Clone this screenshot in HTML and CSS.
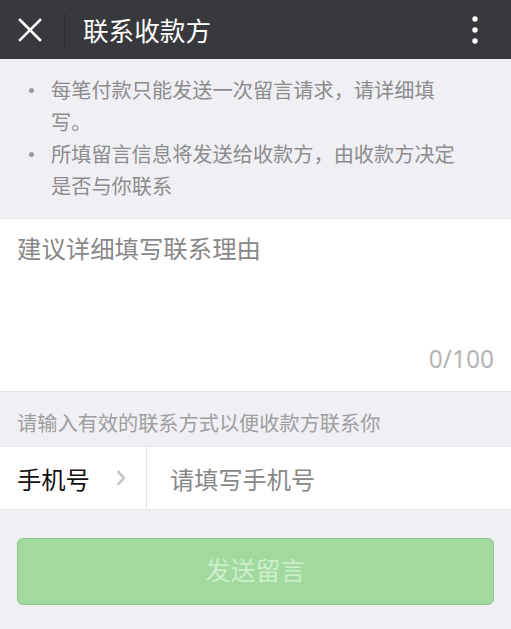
FILE: index.html
```html
<!DOCTYPE html>
<html lang="zh-CN">
<head>
<meta charset="utf-8">
<title>联系收款方</title>
<link rel="stylesheet" href="styles.css">
</head>
<body>
<header class="topbar">
  <span class="close">
    <svg width="24" height="24" viewBox="0 0 24 24"><path d="M2 2L22 22M22 2L2 22" stroke="#fff" stroke-width="2.6" stroke-linecap="square" fill="none"/></svg>
  </span>
  <span class="divider"></span>
  <h1 class="title">联系收款方</h1>
  <span class="more">
    <svg width="8" height="28" viewBox="0 0 8 28"><circle cx="4" cy="3" r="2.7" fill="#fff"/><circle cx="4" cy="14" r="2.7" fill="#fff"/><circle cx="4" cy="25" r="2.7" fill="#fff"/></svg>
  </span>
</header>
<ul class="notes">
  <li>每笔付款只能发送一次留言请求，请详细填写。</li>
  <li>所填留言信息将发送给收款方，由收款方决定是否与你联系</li>
</ul>
<section class="message">
  <div class="placeholder">建议详细填写联系理由</div>
  <div class="counter">0/100</div>
</section>
<p class="hint">请输入有效的联系方式以便收款方联系你</p>
<section class="phone">
  <div class="phone-label">手机号
    <svg class="chev" width="12" height="18" viewBox="0 0 12 18"><path d="M2.5 2L9 9L2.5 16" stroke="#c8c8c8" stroke-width="2.6" fill="none"/></svg>
  </div>
  <div class="phone-input">请填写手机号</div>
</section>
<div class="btn-wrap">
  <div class="btn">发送留言</div>
</div>
</body>
</html>
```
FILE: styles.css
```css
* { box-sizing: border-box; }
html, body {
  margin: 0;
  padding: 0;
}
body {
  background: #efeff4;
  font-family: "Noto Sans CJK SC", "Noto Sans", sans-serif;
  width: 511px;
  height: 629px;
  overflow: hidden;
}
.topbar {
  height: 59px;
  background: #38393d;
  display: flex;
  align-items: center;
  padding-left: 18px;
  padding-right: 32px;
}
.close {
  display: flex;
  width: 24px;
  height: 24px;
}
.divider {
  width: 1px;
  height: 34px;
  background: #2c2d30;
  margin-left: 22px;
}
.title {
  margin: 0 0 0 18px;
  font-size: 25.6px;
  font-weight: 400;
  color: #fff;
  line-height: 32px;
  flex: 1;
}
.more {
  display: flex;
}
.notes {
  list-style: none;
  margin: 0;
  padding: 15px 0 16px 51px;
  width: 466px;
  color: #8c8c8c;
  font-size: 20.2px;
  line-height: 32px;
}
.notes li {
  position: relative;
}
.notes li::before {
  content: "";
  position: absolute;
  left: -22px;
  top: 14px;
  width: 5px;
  height: 5px;
  border-radius: 50%;
  background: #9a9a9a;
}
.message {
  background: #fff;
  border-top: 1px solid #e3e3e6;
  border-bottom: 1px solid #e3e3e6;
  height: 174px;
  display: flex;
  flex-direction: column;
  justify-content: space-between;
  padding: 13px 17px 16px 17px;
}
.placeholder {
  font-size: 24.4px;
  line-height: 32px;
  color: #888;
}
.counter {
  align-self: flex-end;
  font-size: 24.5px;
  line-height: 32px;
  color: #b4b4b4;
  font-family: "Noto Sans", sans-serif;
}
.hint {
  margin: 0;
  padding: 17px 17px 9px;
  font-size: 20.2px;
  line-height: 28px;
  color: #9e9e9e;
}
.phone {
  background: #fff;
  border-top: 1px solid #e6e6e9;
  border-bottom: 1px solid #e6e6e9;
  height: 64px;
  display: flex;
  align-items: stretch;
}
.phone-label {
  width: 147px;
  border-right: 1px solid #e6e6e9;
  display: flex;
  align-items: center;
  padding-left: 17px;
  font-size: 24.3px;
  color: #111;
}
.chev {
  margin-left: 25px;
}
.phone-input {
  display: flex;
  align-items: center;
  padding-left: 23px;
  font-size: 24.2px;
  color: #888;
}
.btn-wrap {
  padding: 28px 17px 0;
}
.btn {
  height: 67px;
  border-radius: 6px;
  background: #a1d99f;
  border: 1px solid #8ecb8b;
  display: flex;
  align-items: center;
  justify-content: center;
  padding-bottom: 5px;
  font-size: 25px;
  color: #cdeecb;
}
```
